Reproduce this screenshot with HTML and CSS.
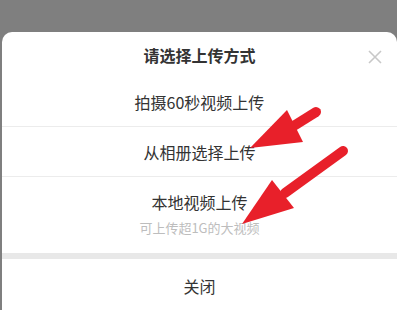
FILE: index.html
```html
<!DOCTYPE html>
<html lang="zh">
<head>
<meta charset="utf-8">
<link rel="stylesheet" href="styles.css">
</head>
<body>
<div class="sheet">
  <div class="header">
    <span class="title">请选择上传方式</span>
    <svg class="close-x" width="14" height="14" viewBox="0 0 14 14"><path d="M1 1L13 13M13 1L1 13" stroke="#c8c8c8" stroke-width="1.6" fill="none"/></svg>
  </div>
  <div class="row">拍摄60秒视频上传</div>
  <div class="row">从相册选择上传</div>
  <div class="row row-tall">
    <span class="main">本地视频上传</span>
    <span class="sub">可上传超1G的大视频</span>
  </div>
  <div class="band"></div>
  <div class="row row-close">关闭</div>
</div>
<svg class="arrows" width="397" height="310" viewBox="0 0 397 310">
  <line x1="316" y1="112" x2="292" y2="127" stroke="#e8202a" stroke-width="10" stroke-linecap="round"/>
  <polygon points="287,110 303,142 250,148" fill="#e8202a"/>
  <line x1="343" y1="151" x2="285" y2="193" stroke="#e8202a" stroke-width="10" stroke-linecap="round"/>
  <polygon points="272,180 294,208 242,224" fill="#e8202a"/>
</svg>
</body>
</html>
```
FILE: styles.css
```css
html, body {
  margin: 0;
  padding: 0;
  height: 100%;
  overflow: hidden;
}
body {
  background: #7f7f7f;
  font-family: "Noto Sans CJK SC", "Noto Sans", sans-serif;
  color: #333;
  position: relative;
  display: flex;
  flex-direction: column;
}
.sheet {
  margin: 32px 0 0 2px;
  background: #fff;
  border-radius: 10px 10px 0 0;
  flex: 1;
  min-height: 0;
  overflow: hidden;
  display: flex;
  flex-direction: column;
}
.header {
  height: 45px;
  flex: none;
  display: flex;
  align-items: center;
  justify-content: center;
  position: relative;
}
.title {
  font-size: 16px;
  font-weight: bold;
  color: #333;
}
.close-x {
  position: absolute;
  right: 15px;
  top: 18px;
}
.row {
  height: 49px;
  flex: none;
  display: flex;
  align-items: center;
  justify-content: center;
  font-size: 16px;
  color: #333;
  border-bottom: 1px solid #ececec;
}
.row-tall {
  height: 76px;
  border-bottom: none;
  flex-direction: column;
  justify-content: flex-start;
  padding-top: 14px;
  box-sizing: border-box;
}
.row-tall .main {
  line-height: 22px;
}
.row-tall .sub {
  margin-top: 6px;
  line-height: 18px;
  font-size: 13px;
  color: #bdbdbd;
}
.band {
  height: 6px;
  flex: none;
  background: #e8e8e8;
}
.row-close {
  height: 54px;
  border-bottom: none;
}
.arrows {
  position: absolute;
  left: 0;
  top: 0;
  pointer-events: none;
}
```
